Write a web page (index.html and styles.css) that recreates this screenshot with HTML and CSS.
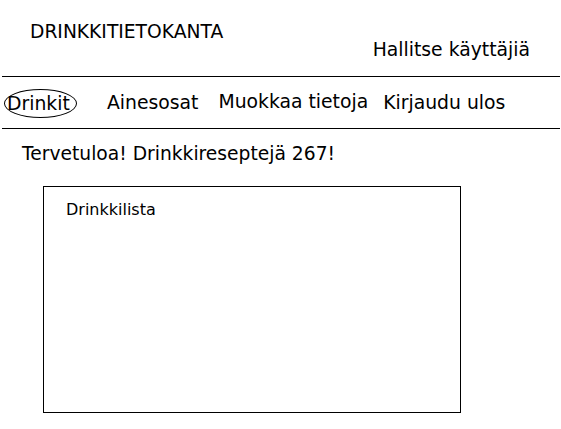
FILE: index.html
```html
<!DOCTYPE html>
<html lang="fi">
<head>
<meta charset="utf-8">
<title>Drinkkitietokanta</title>
<link rel="stylesheet" href="styles.css">
</head>
<body>
<header class="top">
  <div class="brand">DRINKKITIETOKANTA</div>
  <div class="admin">Hallitse käyttäjiä</div>
</header>
<nav class="nav">
  <span class="nav-item active">Drinkit</span>
  <span class="nav-item n2">Ainesosat</span>
  <span class="nav-item n3">Muokkaa tietoja</span>
  <span class="nav-item n4">Kirjaudu ulos</span>
</nav>
<p class="welcome">Tervetuloa! Drinkkireseptejä 267!</p>
<section class="list-box">
  <div class="list-title">Drinkkilista</div>
</section>
</body>
</html>
```
FILE: styles.css
```css
html, body {
  margin: 0;
  padding: 0;
  background: #fff;
}
body {
  font-family: "DejaVu Sans", sans-serif;
  color: #000;
  font-size: 18.8px;
  line-height: 22px;
  width: 561px;
}
.top {
  display: flex;
  align-items: flex-start;
  height: 76px;
}
.brand {
  margin-left: 30px;
  margin-top: 21px;
  font-size: 18.7px;
}
.admin {
  margin-left: auto;
  margin-right: 31px;
  margin-top: 39px;
}
.nav {
  display: flex;
  align-items: center;
  height: 51px;
  margin: 0 1px 0 2px;
  border-top: 1px solid #000;
  border-bottom: 1px solid #000;
}
.nav-item {
  display: block;
  white-space: nowrap;
}
.active {
  margin-left: 2px;
  width: 73px;
  height: 29px;
  box-sizing: border-box;
  border: 1px solid #000;
  border-radius: 50%;
  display: flex;
  align-items: center;
  justify-content: flex-start;
  padding-left: 2px;
  margin-top: 2px;
}
.n2 {
  margin-left: 30px;
}
.n3 {
  margin-left: 20px;
  margin-top: -2px;
}
.n4 {
  margin-left: 15px;
}
.welcome {
  margin: 14px 0 0 22px;
  font-size: 18.7px;
}
.list-box {
  margin: 21px 0 0 43px;
  width: 418px;
  height: 227px;
  box-sizing: border-box;
  border: 1px solid #000;
  padding: 13px 0 0 22px;
}
.list-title {
  font-size: 16px;
  line-height: 20px;
}
```
